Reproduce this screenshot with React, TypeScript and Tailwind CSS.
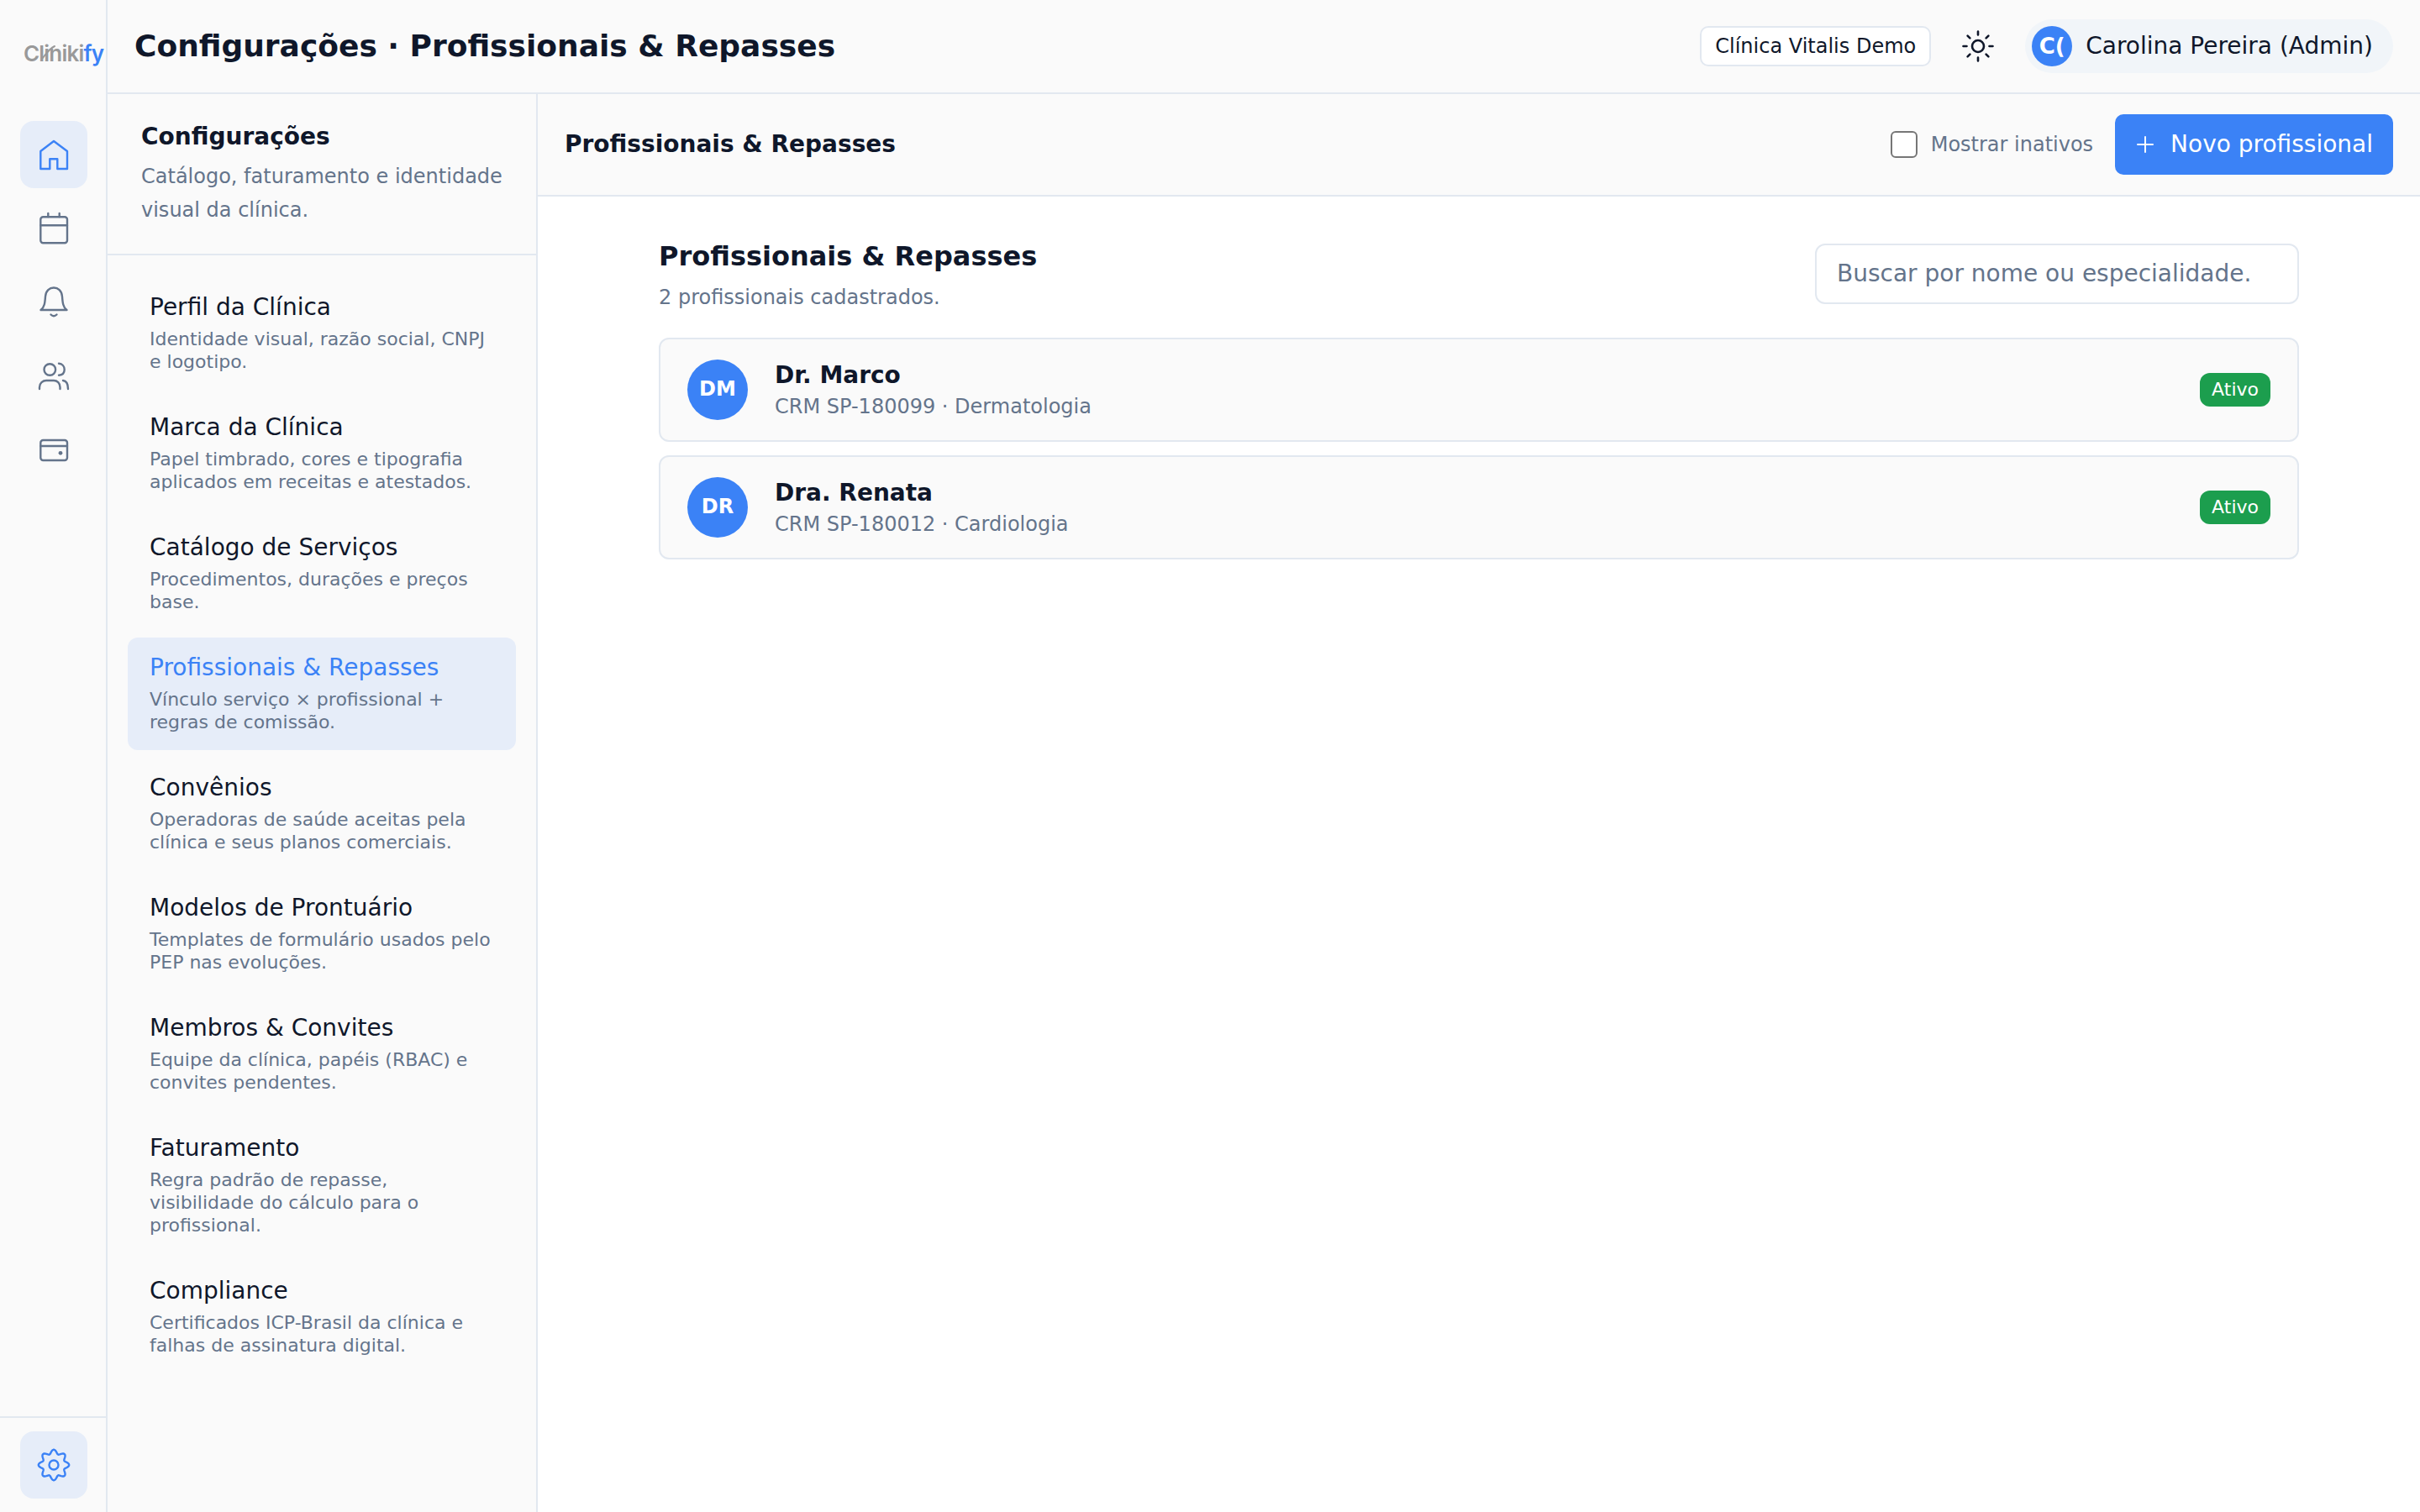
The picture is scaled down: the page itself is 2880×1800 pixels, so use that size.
import React from "react";

const gearPath = (() => {
  const pts: string[] = [];
  for (let i = 0; i <= 160; i++) {
    const t = (i / 160) * Math.PI * 2;
    const r = 15.8 + 2.4 * Math.cos(8 * t);
    pts.push(`${(20 + r * Math.cos(t)).toFixed(2)} ${(20 + r * Math.sin(t)).toFixed(2)}`);
  }
  return "M" + pts.join("L") + "Z";
})();

const Ico = ({ children, active }: { children: React.ReactNode; active?: boolean }) => (
  <svg width="40" height="40" viewBox="0 0 40 40" fill="none" stroke={active ? "#3b82f6" : "#64748b"} strokeWidth="2.4" strokeLinecap="round" strokeLinejoin="round">
    {children}
  </svg>
);

const RailBtn = ({ active, children }: { active?: boolean; children: React.ReactNode }) => (
  <div className={`w-20 h-20 rounded-2xl flex items-center justify-center ${active ? "bg-[#e6edf9]" : ""}`}>{children}</div>
);

const items = [
  ["Perfil da Clínica", "Identidade visual, razão social, CNPJ e logotipo."],
  ["Marca da Clínica", "Papel timbrado, cores e tipografia aplicados em receitas e atestados."],
  ["Catálogo de Serviços", "Procedimentos, durações e preços base."],
  ["Profissionais & Repasses", "Vínculo serviço × profissional + regras de comissão."],
  ["Convênios", "Operadoras de saúde aceitas pela clínica e seus planos comerciais."],
  ["Modelos de Prontuário", "Templates de formulário usados pelo PEP nas evoluções."],
  ["Membros & Convites", "Equipe da clínica, papéis (RBAC) e convites pendentes."],
  ["Faturamento", "Regra padrão de repasse, visibilidade do cálculo para o profissional."],
  ["Compliance", "Certificados ICP-Brasil da clínica e falhas de assinatura digital."],
];

const pros = [
  ["DM", "Dr. Marco", "CRM SP-180099 · Dermatologia"],
  ["DR", "Dra. Renata", "CRM SP-180012 · Cardiologia"],
];

export default function App() {
  return (
    <div className="flex h-screen w-full overflow-hidden bg-white text-[#0f172a] font-['DejaVu_Sans',sans-serif]">
      <aside className="w-[128px] shrink-0 flex flex-col bg-[#fafafa] border-r-2 border-[#e2e8f0]">
        <div className="relative h-[110px] flex items-center pl-[28px] pt-[18px] font-['Inter',sans-serif] font-semibold text-[26px] tracking-[-0.8px] leading-none">
          <span className="text-[#999999]">Clinik</span>
          <span className="text-[#999999]">i</span>
          <span className="text-[#3b82f6]">fy</span>
          <svg className="absolute left-[40px] top-[50px]" width="30" height="26" viewBox="0 0 30 26" fill="none" stroke="#999999" strokeWidth="2" strokeLinecap="round">
            <path d="M10 20C13 17 17 9 25 5" />
          </svg>
        </div>
        <nav className="flex flex-col gap-2 pl-6 pt-[34px] flex-1">
          <RailBtn active>
            <Ico active><path d="M20 4L36 16V37H24.3V25.3H15.3V37H4.3V16Z" /></Ico>
          </RailBtn>
          <RailBtn>
            <Ico><rect x="4.3" y="6.3" width="31.7" height="31" rx="3" /><path d="M4.3 16.3H36M13.3 2V6M26.7 2V6" /></Ico>
          </RailBtn>
          <RailBtn>
            <Ico><path d="M4.5 29H35.5C31 26 30.5 20 30 13C29.5 6 25 2.5 20 2.5C15 2.5 10.5 6 10 13C9.5 20 9 26 4.5 29Z" /><path d="M16.5 34.5Q20 38 23.5 34.5" /></Ico>
          </RailBtn>
          <RailBtn>
            <Ico><circle cx="15.3" cy="12" r="6.8" /><path d="M26 4.7C30 5 32.7 8 32.7 12C32.7 16 30 18.5 26 18.7" /><path d="M3 35V33C3 28 7 25 11 25H20C24 25 27.5 28 27.5 33V35" /><path d="M31 25C35 25.5 37 29 37 35" /></Ico>
          </RailBtn>
          <RailBtn>
            <Ico><rect x="4.3" y="8" width="31.7" height="24" rx="3" /><path d="M4.3 15H36" /><circle cx="28" cy="23.3" r="2.4" fill="#64748b" stroke="none" /></Ico>
          </RailBtn>
        </nav>
        <div className="border-t-2 border-[#e2e8f0] h-[114px] pl-6 pt-[16px]">
          <RailBtn active>
            <Ico active><path d={gearPath} /><circle cx="20" cy="20" r="5.5" /></Ico>
          </RailBtn>
        </div>
      </aside>

      <div className="flex-1 min-w-0 flex flex-col">
        <header className="h-[112px] shrink-0 flex items-center bg-[#fafafa] border-b-2 border-[#e2e8f0] pl-[32px] pr-[32px]">
          <h1 className="text-[36px] font-bold leading-none flex-1">Configurações · Profissionais &amp; Repasses</h1>
          <div className="h-[48px] px-[16px] flex items-center rounded-[10px] border-2 border-[#e2e8f0] bg-white text-[24px]">Clínica Vitalis Demo</div>
          <svg className="ml-[36px]" width="40" height="40" viewBox="0 0 40 40" fill="none" stroke="#0f172a" strokeWidth="2.6" strokeLinecap="round">
            <circle cx="20" cy="20" r="7" />
            <path d="M20 2.5V6.5M20 33.5V37.5M7.6 7.6L10.4 10.4M29.6 29.6L32.4 32.4M2.5 20H6.5M33.5 20H37.5M7.6 32.4L10.4 29.6M29.6 10.4L32.4 7.6" />
          </svg>
          <div className="ml-[36px] h-[64px] pl-[8px] pr-[24px] rounded-full bg-[#f1f5f9] flex items-center gap-[16px]">
            <div className="w-12 h-12 rounded-full bg-[#3b82f6] text-white font-bold text-[26px] flex items-center justify-center">C(</div>
            <span className="text-[28px]">Carolina Pereira (Admin)</span>
          </div>
        </header>

        <div className="flex-1 min-h-0 flex">
          <div className="w-[512px] shrink-0 flex flex-col bg-[#fafafa] border-r-2 border-[#e2e8f0]">
            <div className="h-[192px] shrink-0 border-b-2 border-[#e2e8f0] pt-[32px] px-[40px]">
              <h2 className="text-[28px] font-bold leading-[38px]">Configurações</h2>
              <p className="mt-[8px] text-[24px] leading-[40px] text-[#64748b]">Catálogo, faturamento e identidade visual da clínica.</p>
            </div>
            <nav className="flex flex-col gap-[9px] px-[24px] pt-[26px]">
              {items.map(([t, d], i) => (
                <div key={t} className={`rounded-xl px-[26px] pt-[18px] pb-[20px] ${i === 3 ? "bg-[#e6edf9]" : ""}`}>
                  <div className={`text-[28px] leading-[36px] ${i === 3 ? "text-[#3b82f6]" : ""}`}>{t}</div>
                  <div className="mt-[6px] text-[22px] leading-[27px] text-[#64748b]">{d}</div>
                </div>
              ))}
            </nav>
          </div>

          <main className="flex-1 min-w-0 flex flex-col">
            <div className="h-[122px] shrink-0 flex items-center bg-[#fafafa] border-b-2 border-[#e2e8f0] pl-[32px] pr-[32px]">
              <h2 className="text-[28px] font-bold flex-1">Profissionais &amp; Repasses</h2>
              <div className="w-[32px] h-[32px] rounded-[6px] border-2 border-[#767676] bg-white" />
              <span className="ml-[16px] text-[24px] text-[#64748b]">Mostrar inativos</span>
              <button className="ml-[26px] h-[72px] px-[24px] rounded-[10px] bg-[#3b82f6] text-white text-[28px] flex items-center gap-[18px]">
                <svg width="24" height="24" viewBox="0 0 24 24" stroke="#fff" strokeWidth="2" strokeLinecap="round"><path d="M12 3v18M3 12h18" /></svg>
                Novo profissional
              </button>
            </div>
            <div className="w-[1952px] mx-auto pt-[47px]">
              <div className="flex items-start justify-between">
                <div>
                  <h3 className="text-[32px] font-bold leading-[48px]">Profissionais &amp; Repasses</h3>
                  <p className="mt-[7px] text-[24px] leading-[36px] text-[#64748b]">2 profissionais cadastrados.</p>
                </div>
                <div className="mt-[9px] w-[576px] h-[72px] rounded-[12px] border-2 border-[#e2e8f0] bg-white flex items-center px-[24px] text-[28px] text-[#64748b] whitespace-nowrap">Buscar por nome ou especialidade.</div>
              </div>
              <div className="mt-[30px] flex flex-col gap-[16px]">
                {pros.map(([a, n, s]) => (
                  <div key={a} className="h-[124px] rounded-[12px] border-2 border-[#e2e8f0] bg-[#fafafa] flex items-center px-[32px]">
                    <div className="w-[72px] h-[72px] rounded-full bg-[#3b82f6] text-white font-bold text-[24px] flex items-center justify-center pb-[2px]">{a}</div>
                    <div className="ml-[32px] flex-1 pt-[2px]">
                      <div className="text-[28px] font-bold leading-[38px]">{n}</div>
                      <div className="text-[24px] leading-[36px] text-[#64748b]">{s}</div>
                    </div>
                    <span className="h-[40px] px-[14px] pb-[2px] rounded-[12px] bg-[#1c9e4e] text-white text-[22px] flex items-center">Ativo</span>
                  </div>
                ))}
              </div>
            </div>
          </main>
        </div>
      </div>
    </div>
  );
}
